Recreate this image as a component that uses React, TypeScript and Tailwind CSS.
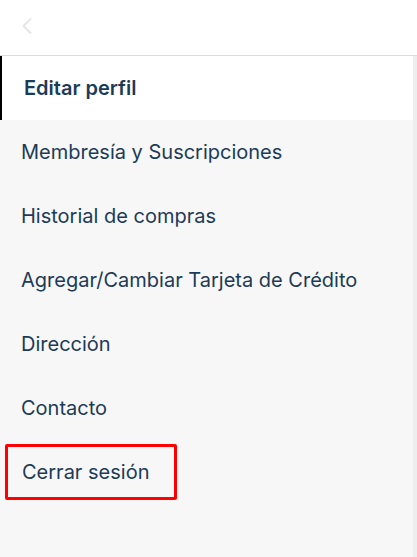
import { ChevronLeft } from 'lucide-react'

const items = [
  'Membresía y Suscripciones',
  'Historial de compras',
  'Agregar/Cambiar Tarjeta de Crédito',
  'Dirección',
  'Contacto',
]

export default function App() {
  return (
    <div className="w-[417px] h-[557px] flex flex-col bg-[#f7f7f7] font-['Inter',sans-serif] text-[#1c3b57]">
      <header className="h-[56px] shrink-0 bg-white border-b border-[#dddddd] flex items-start pt-[12px] pl-[13px]">
        <ChevronLeft size={28} strokeWidth={1.8} className="text-[#e6e6e6]" />
      </header>
      <div className="flex flex-1">
        <nav className="flex-1 flex flex-col">
          <div className="h-[64px] bg-white border-l-2 border-black flex items-center pl-[22px] text-[20px] font-semibold">
            Editar perfil
          </div>
          {items.map((label) => (
            <div key={label} className="h-[64px] flex items-center pl-[21px] text-[20px]">
              {label}
            </div>
          ))}
          <div className="h-[64px] flex items-center pl-[5px]">
            <div className="w-[172px] h-[56px] border-[3px] border-[#ff0000] rounded-[2px] flex items-center pl-[14px] text-[20px]">
              Cerrar sesión
            </div>
          </div>
        </nav>
        <div className="w-[4px] bg-[#eeeeee]" />
      </div>
    </div>
  )
}
